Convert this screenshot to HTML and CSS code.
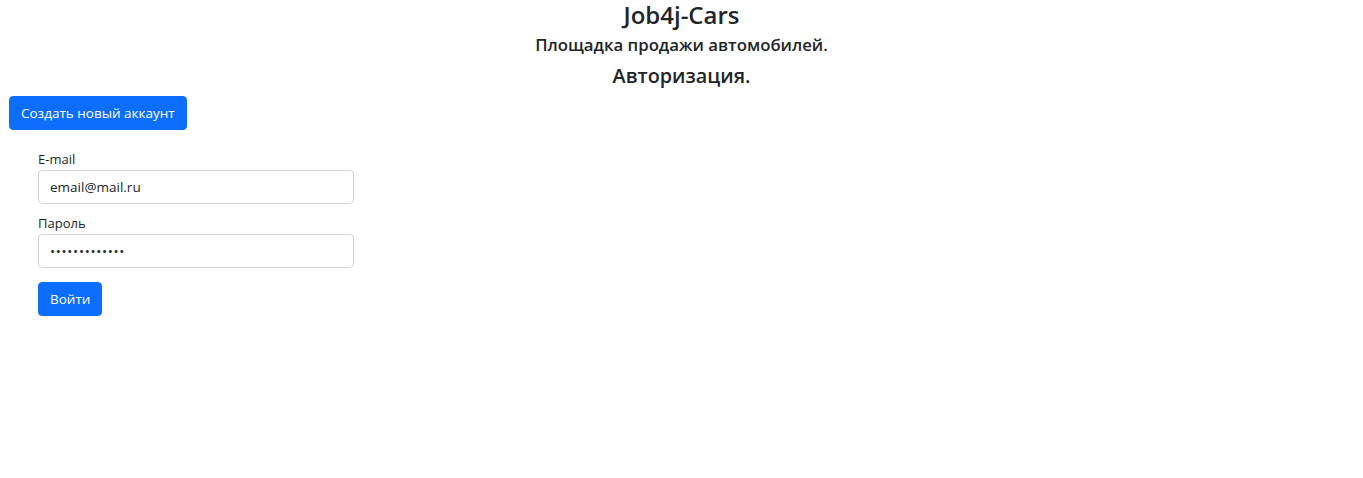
FILE: index.html
```
<!DOCTYPE html>
<html lang="ru">
<head>
<meta charset="utf-8">
<title>Job4j-Cars</title>
<link rel="stylesheet" href="styles.css">
</head>
<body>
<header class="head">
  <h1 class="title">Job4j-Cars</h1>
  <h2 class="subtitle">Площадка продажи автомобилей.</h2>
  <h3 class="section">Авторизация.</h3>
</header>
<div class="actions">
  <button class="btn" type="button">Создать новый аккаунт</button>
</div>
<form class="form">
  <label class="label" for="email">E-mail</label>
  <input class="input" id="email" type="text" value="email@mail.ru">
  <label class="label" for="pass">Пароль</label>
  <input class="input input-pass" id="pass" type="password" value="1234567890123">
  <div class="submit">
    <button class="btn" type="button">Войти</button>
  </div>
</form>
</body>
</html>
```
FILE: styles.css
```
* { box-sizing: border-box; }
body {
  margin: 0;
  font-family: "Open Sans", "Noto Sans", sans-serif;
  color: #212529;
  background: #fff;
}
.head {
  display: flex;
  flex-direction: column;
  align-items: center;
}
.title {
  margin: 0;
  font-size: 24px;
  font-weight: 600;
  line-height: 30px;
}
.subtitle {
  margin: 2px 0 0;
  font-size: 16.8px;
  font-weight: 600;
  line-height: 26px;
}
.section {
  margin: 3px 0 0;
  font-size: 19.8px;
  font-weight: 600;
  line-height: 30px;
}
.actions {
  padding: 5px 9px 0;
}
.btn {
  font-family: inherit;
  font-size: 13.5px;
  color: #fff;
  background: #0d6efd;
  border: 1px solid #0d6efd;
  border-radius: 4px;
  height: 34px;
  padding: 0 11px;
}
.form {
  display: flex;
  flex-direction: column;
  align-items: flex-start;
  padding: 19px 0 0 38px;
}
.label {
  font-size: 13px;
  line-height: 20px;
  margin-bottom: 1px;
}
.input {
  width: 316px;
  height: 34px;
  border: 1px solid #ced4da;
  border-radius: 4px;
  padding: 0 11px;
  font-family: inherit;
  font-size: 13.5px;
  color: #212529;
  margin-bottom: 9px;
}
.input-pass {
  letter-spacing: 0.7px;
}
.submit {
  padding-top: 5px;
}
```
